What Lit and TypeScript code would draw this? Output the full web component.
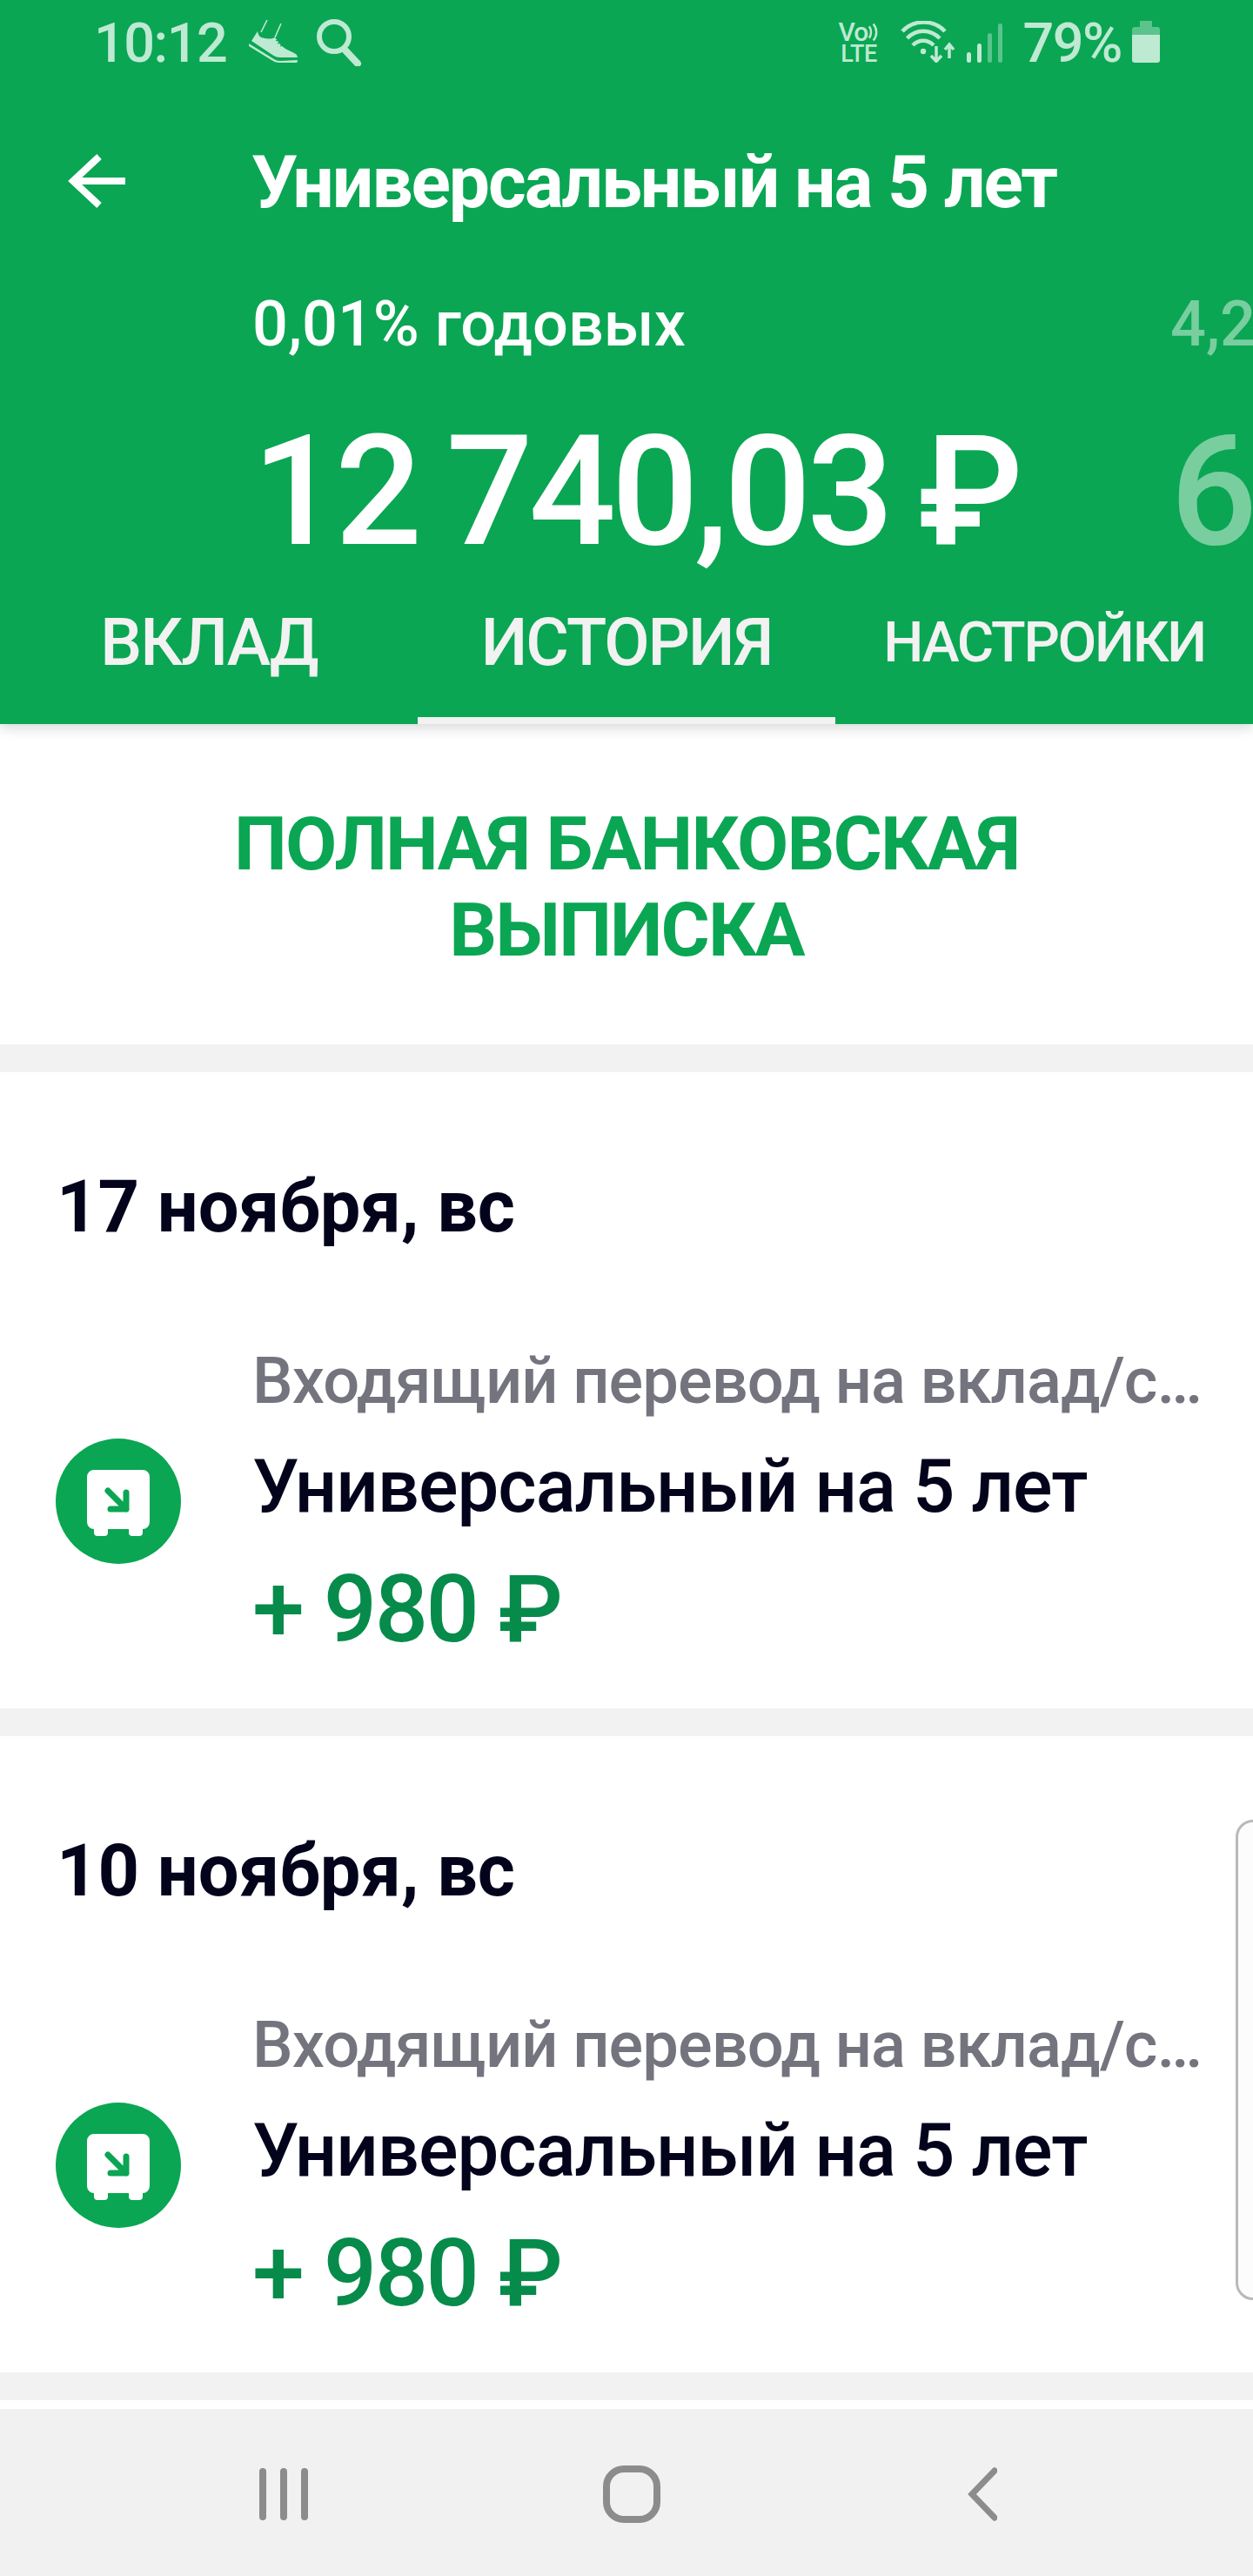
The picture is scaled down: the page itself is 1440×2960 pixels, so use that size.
import { LitElement, html, css, svg } from "lit";
import { customElement } from "lit/decorators.js";

const safeIcon = html`<svg class="safe" viewBox="0 0 144 144" width="144" height="144" aria-hidden="true">
  <circle cx="72" cy="72" r="72" fill="#0AA653"/>
  <path fill="#fff" d="M44 36h56a8 8 0 0 1 8 8v52a8 8 0 0 1-8 8v4a4 4 0 0 1-4 4H88a4 4 0 0 1-4-4v-4H60v4a4 4 0 0 1-4 4H48a4 4 0 0 1-4-4v-4a8 8 0 0 1-8-8V44a8 8 0 0 1 8-8z"/>
  <path fill="none" stroke="#0AA653" stroke-width="7" stroke-linecap="round" stroke-linejoin="round" d="M60 60l21 21M81 62v19H63"/>
</svg>`;

const STATUS = "#BEE9D2";

const shoe = svg`
  <path d="M21 0l-7 14M37 4l-7 16" fill="none" stroke="${STATUS}" stroke-width="1.6"/>
  <path d="M10 13C11 18 13 20 16 20.5 21 22 26 22 30 20L36 28C41 34 50 36 55 40L56 43H36C32 43 30 42 27 40L3 24Z"/>
  <path d="M31 24l5-2M33 27l5-2M36 30l5-2" fill="none" stroke="#0AA653" stroke-width="1.2"/>
  <path d="M0 27L29 45C31 46 33 47 36 47L56 46 55.5 49H35C31 49 29 48 26 46L0 30Z"/>`;

interface Op { date: string }
const ops: Op[] = [{ date: "17 ноября, вс" }, { date: "10 ноября, вс" }];

@customElement("app-root")
export class AppRoot extends LitElement {
  static styles = css`
    :host { display: block; width: 1440px; height: 2960px; overflow: hidden; position: relative; background: #f2f2f2; font-family: Roboto, "Liberation Sans", sans-serif; }
    * { box-sizing: border-box; }
    .page { display: flex; flex-direction: column; height: 2960px; }
    header { background: #0AA653; color: #fff; height: 832px; position: relative; z-index: 2; box-shadow: 0 4px 14px rgba(0,0,0,.16); display: flex; flex-direction: column; }
    .status { height: 130px; display: flex; align-items: flex-start; padding: 10px 107px 0 108px; color: #BEE9D2; }
    .status .time, .status .pct { font-size: 63px; line-height: 80px; font-weight: 500; letter-spacing: -1.5px; }
    .status .spacer { flex: 1; }
    .status svg { display: block; }
    .shoe { margin: 13px 0 0 26px; }
    .search { margin: 12px 0 0 22px; }
    .volte { width: 47px; margin: 14px 25px 0 0; font-weight: 500; text-align: center; }
    .volte .vo { display: flex; justify-content: center; align-items: center; height: 26px; font-size: 30px; line-height: 26px; letter-spacing: -1px; }
    .volte .lte { font-size: 27px; line-height: 24px; letter-spacing: -.5px; }
    .wifi { margin: 14px 0 0 0; }
    .signal { margin: 17px 23px 0 13px; }
    .batt { margin: 14px 0 0 12px; }
    .toolbar { height: 160px; display: flex; align-items: center; padding-left: 78px; }
    .toolbar svg { display: block; margin-top: -4px; }
    .title { font-size: 84px; line-height: 160px; font-weight: 700; margin-left: 145px; white-space: nowrap; letter-spacing: -2.1px; }
    .carousel { display: flex; overflow: hidden; padding-top: 38px; }
    .slide { flex: none; width: 1345px; padding-left: 290px; white-space: nowrap; }
    .slide.next { opacity: .45; padding-left: 0; width: 400px; }
    .rate { font-size: 72px; line-height: 90px; font-weight: 500; }
    .sum { font-size: 176px; line-height: 200px; margin-top: 47px; font-weight: 500; letter-spacing: -5px; word-spacing: -6px; }
    .tabs { display: grid; grid-template-columns: repeat(3, 480px); flex: 1; color: #f2f2f2; }
    .tab { display: flex; flex-direction: column; align-items: center; padding-top: 23px; font-size: 76px; line-height: 100px; font-weight: 500; letter-spacing: -2px; }
    .tab.small { font-size: 65px; letter-spacing: -2.3px; }
    .tab .label { flex: 1; }
    .tab .bar { height: 8px; width: 100%; }
    .tab.active .bar { background: #f2f2f2; }
    .statement { background: #fff; height: 368px; padding-top: 6px; display: flex; align-items: center; justify-content: center; text-align: center; color: #0AA653; font-size: 86px; line-height: 99px; font-weight: 700; letter-spacing: -1.8px; }
    .card { background: #fff; height: 731px; margin-top: 32px; padding-top: 105px; }
    .date { font-size: 83px; line-height: 100px; font-weight: 700; color: #03031c; padding-left: 65px; }
    .row { display: grid; grid-template-columns: 144px 1fr; column-gap: 82px; padding-left: 64px; margin-top: 100px; align-items: center; }
    .safe { display: block; margin-top: 3px; }
    .texts { min-width: 0; }
    .op { font-size: 74px; line-height: 100px; font-weight: 500; color: #74747e; white-space: nowrap; overflow: hidden; text-overflow: ellipsis; width: 1108px; letter-spacing: -.9px; }
    .name { font-size: 85px; line-height: 100px; margin-top: 21px; color: #03031c; font-weight: 500; white-space: nowrap; letter-spacing: -1px; }
    .amount { font-size: 108px; line-height: 120px; margin-top: 31px; color: #068B4B; font-weight: 500; white-space: nowrap; letter-spacing: -2.5px; }
    .tail { background: #fff; height: 10px; margin-top: 32px; }
    nav { flex: 1; display: grid; grid-template-columns: repeat(3, 400px); padding: 3px 0 0 126px; align-items: center; background: #f1f1f1; }
    nav svg { display: block; justify-self: center; }
    .handle { position: absolute; left: 1420px; top: 2091px; width: 40px; height: 552px; border: 3px solid #b9b9b9; border-radius: 24px; background: #fcfcfc; }
  `;

  render() {
    return html`<div class="page">
      <header>
        <div class="status">
          <span class="time">10:12</span>
          <svg class="shoe" width="56" height="49" viewBox="0 0 56 49" fill="${STATUS}">${shoe}</svg>
          <svg class="search" width="54" height="54" viewBox="0 0 54 54" fill="none" stroke="${STATUS}"><circle cx="20" cy="20" r="17" stroke-width="6"/><path d="M33 36l14 15" stroke-width="8" stroke-linecap="round"/></svg>
          <span class="spacer"></span>
          <div class="volte"><div class="vo">Vo<svg width="14" height="24" viewBox="0 0 14 24" fill="none" stroke="${STATUS}" stroke-width="2.6"><path d="M2 5c3 4 3 10 0 14M7 2c5 6 5 14 0 20"/></svg></div><div class="lte">LTE</div></div>
          <svg class="wifi" width="63" height="48" viewBox="0 0 63 48" fill="none" stroke="${STATUS}" stroke-width="4.5"><path d="M2 12C15-2 38-2 51 12M7.500 20C18 9 34 9 45 20M14 28C21 21 31 21 38 28"/><circle cx="26" cy="35" r="3.200" fill="${STATUS}" stroke="none"/><path d="M41 29v17M35 40l6 6.500 6-6.500M56 43V28M51 33l5-6 5 6" stroke-width="3.500"/></svg>
          <svg class="signal" width="41" height="45" viewBox="0 0 41 45" fill="${STATUS}"><rect x="0" y="33" width="5" height="12" rx="2.500"/><rect x="12" y="23" width="5" height="22" rx="2.500"/><rect x="24" y="11" width="5" height="34" rx="2.500" opacity=".45"/><rect x="36" y="0" width="5" height="45" rx="2.500" opacity=".45"/></svg>
          <span class="pct">79%</span>
          <svg class="batt" width="32" height="48" viewBox="0 0 32 48" fill="${STATUS}"><path opacity=".45" d="M9 0h14v7h6a3 3 0 0 1 3 3v6H0v-6a3 3 0 0 1 3-3h6z"/><path d="M0 16h32v29a3 3 0 0 1-3 3H3a3 3 0 0 1-3-3z"/></svg>
        </div>
        <div class="toolbar">
          <svg width="66" height="62" viewBox="0 0 66 62" fill="none" stroke="#fff" stroke-width="8"><path d="M66 31H8M36 3L6 31l30 28"/></svg>
          <div class="title">Универсальный на 5 лет</div>
        </div>
        <div class="carousel">
          <div class="slide"><div class="rate">0,01% годовых</div><div class="sum">12 740,03 ₽</div></div>
          <div class="slide next"><div class="rate">4,20% годовых</div><div class="sum">64 000,00 ₽</div></div>
        </div>
        <div class="tabs">
          <div class="tab"><span class="label">ВКЛАД</span><span class="bar"></span></div>
          <div class="tab active"><span class="label">ИСТОРИЯ</span><span class="bar"></span></div>
          <div class="tab small"><span class="label">НАСТРОЙКИ</span><span class="bar"></span></div>
        </div>
      </header>
      <div class="statement">ПОЛНАЯ БАНКОВСКАЯ<br>ВЫПИСКА</div>
      ${ops.map((o) => html`<section class="card">
        <div class="date">${o.date}</div>
        <div class="row">
          ${safeIcon}
          <div class="texts">
            <div class="op">Входящий перевод на вклад/счет</div>
            <div class="name">Универсальный на 5 лет</div>
            <div class="amount">+ 980 ₽</div>
          </div>
        </div>
      </section>`)}
      <div class="tail"></div>
      <nav>
        <svg width="60" height="62" viewBox="0 0 60 62" fill="none" stroke="#8c8c8c" stroke-width="8" stroke-linecap="round"><path d="M6 5v52M30 5v52M54 5v52"/></svg>
        <svg width="66" height="66" viewBox="0 0 66 66" fill="none" stroke="#8c8c8c" stroke-width="8"><rect x="4" y="4" width="58" height="58" rx="20"/></svg>
        <svg width="40" height="64" viewBox="0 0 40 64" fill="none" stroke="#8c8c8c" stroke-width="7" stroke-linecap="round" stroke-linejoin="miter"><path d="M37 5L11 32l26 27"/></svg>
      </nav>
      <div class="handle"></div>
    </div>`;
  }
}
